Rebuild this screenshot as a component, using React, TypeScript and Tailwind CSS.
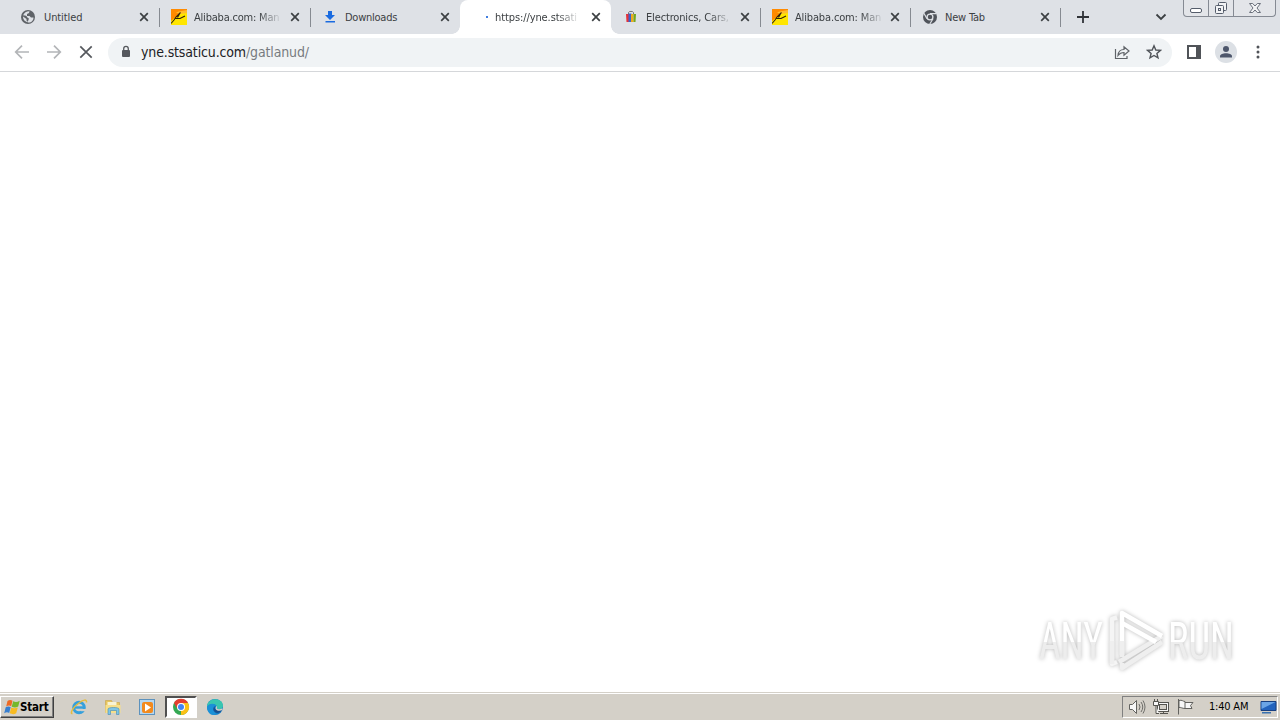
import React from "react";

type TabData = {
  title: string;
  icon: React.ReactNode;
  width?: string;
  titleClass?: string;
  active?: boolean;
  divider?: boolean;
  faded?: boolean;
};

const GlobeIcon = () => (
  <svg width="16" height="16" viewBox="0 0 16 16">
    <circle cx="7" cy="8" r="7" fill="#5f6368" />
    <path d="M8.500 2.200C6 2 3 3.500 2 6.500l3 .3 1.500 2L8 9.500l-1.500 4c4 .5 6-2 6-5L10 8.500 8.500 7H6V5l2-1z" fill="#dee1e6" />
    <path d="M2 6.500 5 7l1.500 2L5 11l1.500 3C3 13.500 1.500 10 2 6.500z" fill="#5f6368" />
    <path d="M2 7.500 5.500 10v1.500L7 13c-3 0-5-2.500-5-5.500z" fill="#dee1e6" />
  </svg>
);

const AlibabaIcon = () => (
  <svg width="16" height="16" viewBox="0 0 16 16">
    <rect width="16" height="16" fill="#ffe600" />
    <path d="M0 0h16v4L10 4C6 6 4 9 0 12z" fill="#ff8a00" />
    <path d="M5 3.500C9 1.500 12 2 16 1v3l-7 1z" fill="#ffbd2c" />
    <path d="M0 14.500 3 11l2-3 4.500-4.500M4.500 9.500H9L14 7M8.500 5 6.500 8.500" fill="none" stroke="#33200a" strokeWidth="1.100" />
  </svg>
);

const DownloadIcon = () => (
  <svg width="16" height="16" viewBox="0 0 16 16" fill="#1a6be0">
    <path d="M6 2h4v4h3l-5 5-5-5h3zM3.500 12h9.500v1.500H3.500z" />
  </svg>
);

const BagIcon = () => (
  <svg width="16" height="16" viewBox="0 0 16 16">
    <path d="M5.500 5V3.500C5.500 2 10.500 2 10.500 3.500V5" fill="none" stroke="#777" />
    <path d="M3 5h3v8H3.500z" fill="#e53238" />
    <path d="M5.500 4.500h3V13h-3z" fill="#3b62cf" />
    <path d="M8 5h2.500v8H8z" fill="#f0a91c" />
    <path d="M10.500 5H13l-.5 8h-2z" fill="#74a820" />
  </svg>
);

const ChromeGrayIcon = () => (
  <svg width="16" height="16" viewBox="0 0 16 16">
    <circle cx="8" cy="8" r="7" fill="#50545b" />
    <circle cx="8" cy="8" r="2.900" fill="#50545b" stroke="#dee1e6" strokeWidth="1.300" />
    <path d="M8 4.600h6.300M5 9.700 1.900 4.300M11 9.700 7.800 15" stroke="#dee1e6" strokeWidth="1.200" />
  </svg>
);

const LoadingIcon = () => (
  <svg width="16" height="16" viewBox="0 0 16 16">
    <rect x="14" y="7" width="2" height="2" fill="#3f7de0" />
  </svg>
);

const CloseIcon = () => (
  <svg width="10" height="10" viewBox="0 0 10 10" className="shrink-0">
    <path d="m1.200 1.200 7.600 7.600m0-7.600L1.200 8.800" stroke="#3c4043" strokeWidth="1.700" />
  </svg>
);

const TABS: TabData[] = [
  { title: "Untitled", icon: <GlobeIcon />, width: "w-[150px]", titleClass: "tracking-[-0.1px] -ml-px" },
  { title: "Alibaba.com: Man", icon: <AlibabaIcon />, width: "w-[151px]", titleClass: "tracking-[-0.2px]", divider: true, faded: true },
  { title: "Downloads", icon: <DownloadIcon />, titleClass: "tracking-[-0.25px]", divider: true },
  { title: "https://yne.stsati", icon: <LoadingIcon />, width: "w-[151px]", titleClass: "tracking-[-0.1px]", active: true, faded: true },
  { title: "Electronics, Cars,", icon: <BagIcon />, width: "w-[149px]", titleClass: "tracking-[-0.15px] -ml-px", faded: true },
  { title: "Alibaba.com: Man", icon: <AlibabaIcon />, titleClass: "tracking-[-0.15px]", divider: true, faded: true },
  { title: "New Tab", icon: <ChromeGrayIcon />, titleClass: "tracking-[-0.2px]", divider: true },
];

const Tab = ({ tab }: { tab: TabData }) => (
  <div
    className={`relative flex h-[34px] shrink-0 items-center pl-3 pr-[10px] ${tab.width ?? "w-[150px]"} ${
      tab.active ? "rounded-t-lg bg-white" : ""
    }`}
  >
    {tab.divider && <span className="absolute left-0 top-2 h-[19px] w-px bg-[#868a91]" />}
    {tab.active && (
      <>
        <span className="absolute -left-2 bottom-0 size-2 bg-[radial-gradient(circle_at_top_left,transparent_7.5px,white_8px)]" />
        <span className="absolute -right-2 bottom-0 size-2 bg-[radial-gradient(circle_at_top_right,transparent_7.5px,white_8px)]" />
      </>
    )}
    <span className="-mr-px flex w-4 shrink-0">{tab.icon}</span>
    <span
      className={`ml-2 mt-px shrink-0 whitespace-nowrap text-[11px] leading-4 text-[#3c4043] ${
        tab.faded ? "[mask-image:linear-gradient(to_right,black_76%,transparent_104%)]" : ""
      } ${tab.titleClass}`}
    >
      {tab.title}
    </span>
    <span className="ml-auto flex"><CloseIcon /></span>
  </div>
);

const WindowControls = () => (
  <div className="flex h-[17px] w-[93px] shrink-0 self-start rounded-b-[4px] border border-t-0 border-[#858a93] bg-[#e3e5e9]">
    <div className="flex w-[25px] items-center justify-center border-r border-[#858a93]">
      <svg width="14" height="16" viewBox="0 0 14 16">
        <rect x="1.500" y="8.500" width="11" height="4" rx="1.500" fill="#fff" stroke="#555d6b" />
      </svg>
    </div>
    <div className="flex w-[25px] items-center justify-center border-r border-[#858a93]">
      <svg width="14" height="16" viewBox="0 0 14 16" fill="#f2f3f5" stroke="#555d6b">
        <rect x="4.500" y="2.500" width="8" height="8" rx="1" />
        <rect x="1.500" y="5.500" width="8" height="8" rx="1" />
        <rect x="4.500" y="8.500" width="2" height="2" />
      </svg>
    </div>
    <div className="flex flex-1 items-center justify-center">
      <svg width="14" height="16" viewBox="0 0 14 16">
        <path d="M1.500 3.500h3.200L7 6l2.300-2.500h3.200L9 8l3.500 4.500H9.300L7 10l-2.300 2.500H1.500L5 8z" fill="#f2f3f5" stroke="#6b717c" />
      </svg>
    </div>
  </div>
);

const TabStrip = () => (
  <div className="flex h-[34px] shrink-0 items-center bg-[#dee1e6] pl-[9px]">
    {TABS.map((tab, i) => (
      <Tab key={i} tab={tab} />
    ))}
    <span className="h-[19px] w-px bg-[#868a91]" />
    <svg width="12" height="12" viewBox="0 0 12 12" className="ml-4">
      <path d="M6 0v12M0 6h12" stroke="#303338" strokeWidth="1.800" />
    </svg>
    <svg width="12" height="8" viewBox="0 0 12 8" className="ml-[66px]">
      <path d="m1.500 1.500 4.500 4.500 4.500-4.500" fill="none" stroke="#3c4043" strokeWidth="1.800" />
    </svg>
    <div className="ml-4 self-start">
      <WindowControls />
    </div>
  </div>
);

const Toolbar = () => (
  <div className="flex h-[38px] shrink-0 items-center border-b border-[#d5d7da] bg-white pb-px pl-[14px]">
    <svg width="16" height="16" viewBox="0 0 16 16" fill="none" stroke="#b3b5b8" strokeWidth="1.700">
      <path d="M15 8H2M8 1.700 1.700 8 8 14.300" />
    </svg>
    <svg width="16" height="16" viewBox="0 0 16 16" fill="none" stroke="#b3b5b8" strokeWidth="1.700" className="ml-4">
      <path d="M1 8h13M8 1.700 14.300 8 8 14.300" />
    </svg>
    <svg width="16" height="16" viewBox="0 0 16 16" className="ml-4">
      <path d="m2.300 2.300 11.400 11.400m0-11.400L2.300 13.700" stroke="#55585d" strokeWidth="1.700" />
    </svg>
    <div className="ml-[14px] flex h-[29px] w-[1064px] items-center rounded-full bg-[#f0f3f5] pl-[13px] pr-[10px]">
      <svg width="10" height="14" viewBox="0 0 10 14">
        <rect x="1" y="5" width="8" height="7" rx="1" fill="#55585d" />
        <path d="M2.700 5.500V3.700a2.300 2.300 0 0 1 4.600 0v1.800" fill="none" stroke="#55585d" strokeWidth="1.300" />
      </svg>
      <span className="ml-[10px] whitespace-nowrap text-[14px] leading-5 tracking-[-0.14px] text-[#777b80]">
        <span className="text-[#202124]">yne.stsaticu.com</span>/gatlanud/
      </span>
      <svg width="16" height="16" viewBox="0 0 16 16" fill="none" stroke="#5f6368" strokeWidth="1.200" className="ml-auto">
        <path d="M1.500 5v9.500H13V12M4 11.500c.3-4 2.300-6 6-6V2.700L15 7l-5 4.200V8.500c-2.700 0-4.500 1-6 3z" />
      </svg>
      <svg width="16" height="16" viewBox="0 0 16 16" fill="none" stroke="#505459" strokeWidth="1.400" className="ml-4">
        <path d="m8 1.800 1.800 4.200 4.600.4-3.500 3 1.100 4.500L8 11.500l-4 2.400 1.100-4.500-3.500-3 4.600-.4z" />
      </svg>
    </div>
    <svg width="14" height="14" viewBox="0 0 14 14" className="ml-[15px]">
      <path d="M1 1h12v12H1z" fill="#fff" stroke="#505358" strokeWidth="2" />
      <path d="M9 1h4v12H9z" fill="#505358" />
    </svg>
    <svg width="22" height="22" viewBox="0 0 22 22" className="ml-[14px]">
      <circle cx="11" cy="11" r="11" fill="#dce0e5" />
      <circle cx="11" cy="8" r="3" fill="#4d566b" />
      <path d="M5 16.500v-1.300C5 11.300 17 11.300 17 15.200v1.300z" fill="#4d566b" />
    </svg>
    <svg width="4" height="14" viewBox="0 0 4 14" fill="#505358" className="ml-[19px]">
      <circle cx="2" cy="2" r="1.500" />
      <circle cx="2" cy="7" r="1.500" />
      <circle cx="2" cy="12" r="1.500" />
    </svg>
  </div>
);

const Watermark = () => (
  <svg
    width="210"
    height="72"
    viewBox="1030 604 210 72"
    className="absolute bottom-[16px] right-[40px] [filter:drop-shadow(0_0_2px_rgba(0,0,0,0.28))]"
  >
    <defs>
      <linearGradient id="letters" x1="0" y1="622" x2="0" y2="660" gradientUnits="userSpaceOnUse">
        <stop offset="0.52" stopColor="#fff" />
        <stop offset="0.53" stopColor="#ededed" />
      </linearGradient>
    </defs>
    <g fill="url(#letters)" fontFamily="Roboto, sans-serif" fontSize="52">
      <text x="1039" y="659" textLength="64" lengthAdjust="spacingAndGlyphs">ANY</text>
      <text x="1168" y="659" textLength="66" lengthAdjust="spacingAndGlyphs">RUN</text>
    </g>
    <g fill="none" strokeWidth="4.500" strokeLinejoin="round">
      <path d="M1117 617.500 1112 619v45l5-2" stroke="#f5f5f5" />
      <path d="M1162 636 1119 662M1162 642l-40 26v-5" stroke="#efefef" />
      <path d="M1122 655v-42l40 23" stroke="#fff" />
      <path d="m1122 623 34 19" stroke="#fff" />
      <path d="M1112 641v23M1122 641v16" stroke="#efefef" />
    </g>
  </svg>
);

const StartFlag = () => (
  <svg width="17" height="16" viewBox="0 0 17 16">
    <path d="M3.500 2c2-1.500 3.500-1.200 5-.2L7.200 7.300c-1.500-1-3-1-5 .2z" fill="#ee6a24" />
    <path d="M9.200 2.300c2 1 4 1 6.500-.5L14.200 7.500c-2.500 1.500-4 1.200-6.500.2z" fill="#75b82b" />
    <path d="M1.700 8.300c2-1.200 3.500-1 5-.2L5.200 14c-1.500-1-3-1-5 .2z" fill="#377fd0" />
    <path d="M7.300 8.400c2 1 4 1 6.500 0L12.200 14.300c-2.500 1.200-4 1-6.500 0z" fill="#f8bb21" />
  </svg>
);

const ExplorerIcon = () => (
  <svg width="18" height="18" viewBox="0 0 18 18">
    <circle cx="9" cy="9.500" r="5.300" fill="none" stroke="#35a0dc" strokeWidth="3" />
    <path d="M5 9.500h9.500" stroke="#35a0dc" strokeWidth="2.400" />
    <path d="M11 11h6v2.200h-6z" fill="#d4d0c8" />
    <path d="M2.500 15.500C-.5 16 3 9 9 5c4.500-3.500 8-4 7.500-.5" fill="none" stroke="#e5bc3e" strokeWidth="1.500" />
  </svg>
);

const FolderIcon = () => (
  <svg width="18" height="18" viewBox="0 0 18 18">
    <path d="M1.500 2.500h6l1 2h7v10h-14z" fill="#e7c65f" stroke="#c8a349" strokeWidth=".6" />
    <path d="M3.500 4h9v5h-9z" fill="#f8f3d4" />
    <path d="M1.500 7h15v8h-15z" fill="#f6df8c" />
    <path d="M4 16.500v-5.500c0-2 11-2 11 0v5.500h-2.500v-4h-6v4z" fill="#7fc5e6" stroke="#4389b1" strokeWidth=".6" />
  </svg>
);

const MediaIcon = () => (
  <svg width="18" height="18" viewBox="0 0 18 18">
    <rect x="1.500" y="1.500" width="15" height="15" fill="#b5d7f1" stroke="#5d92bd" />
    <rect x="4" y="4" width="11" height="11" rx="2" fill="#f28a1e" />
    <path d="m7 5.500 6 4-6 4z" fill="#fff" />
  </svg>
);

const ChromeIcon = () => (
  <svg width="18" height="18" viewBox="0 0 18 18">
    <circle cx="9" cy="9" r="8" fill="#34a853" />
    <path d="M9 9V17A8 8 0 0 0 16 5H9z" fill="#fbc116" />
    <path d="M2 5a8 8 0 0 1 14 0H9L5.500 11z" fill="#e53e30" />
    <circle cx="9" cy="9" r="4" fill="#fff" />
    <circle cx="9" cy="9" r="3" fill="#4285f4" />
  </svg>
);

const EdgeIcon = () => (
  <svg width="18" height="18" viewBox="0 0 18 18">
    <circle cx="9" cy="9" r="8" fill="#137cc6" />
    <path d="M1 9C1-1 17-1 17 8c0 3-4 4-6 2.500C12 6 5 4 1 9z" fill="#39c6b0" />
    <path d="M1 9c2-4 8-4 9-1-4 0-4 6 1 8-5 3-10-1-10-7z" fill="#1b91d7" />
    <path d="M9.500 8c-2 2 0 5 6.500 4-1 2-3 3-5 3-4-1-5-5-1.500-7z" fill="#174f91" />
    <path d="M10.500 8c1 .5.500 1.500.2 2.300 1.300 1.500 4 1 5.500 0L16.500 12c-4 2-9 0-6-4z" fill="#d4d0c8" />
  </svg>
);

const Taskbar = () => (
  <div className="flex h-[27px] shrink-0 items-center bg-[#d4d0c8] pr-[2px] shadow-[inset_0_1px_0_white]">
    <button className="mt-px flex h-[22px] w-[54px] items-center border border-b-[#404040] border-l-white border-r-[#404040] border-t-white pl-[3px] text-[11.500px] font-bold tracking-[-0.2px] text-black shadow-[inset_-1px_-1px_0_#808080]">
      <StartFlag />
      <span className="-ml-px mt-px">Start</span>
    </button>
    <div className="ml-[16px] flex items-center gap-4">
      <ExplorerIcon />
      <FolderIcon />
      <MediaIcon />
    </div>
    <div className="ml-[9px] flex h-[22px] w-8 items-center justify-center border-2 border-b-white border-l-[#505050] border-r-white border-t-[#505050] bg-white">
      <ChromeIcon />
    </div>
    <span className="ml-[9px]"><EdgeIcon /></span>
    <div className="ml-auto flex h-[22px] w-[156px] items-center border border-b-white border-l-[#808080] border-r-white border-t-[#808080] pl-[5px]">
      <svg width="18" height="18" viewBox="0 0 18 18" fill="#f7f7f7" stroke="#62625f">
        <path d="M1.500 6.500h3l4-4v13l-4-4h-3z" />
        <path d="M11 6q2 3 0 6M13 4q3.500 5 0 10M15 2.500q4 6.500 0 13" fill="none" strokeWidth=".9" />
      </svg>
      <svg width="18" height="18" viewBox="0 0 18 18" fill="#f7f7f7" stroke="#55544f" className="ml-[6px]">
        <rect x="5.500" y="4.500" width="11" height="9" />
        <rect x="7.500" y="6.500" width="7" height="5" fill="#d4d0c8" />
        <path d="M8 15.500h8M11.500 13.500v2" />
        <path d="M1.500 3.500h5v4h-5zM2.500 1v2.500M5.500 1v2.500M4 7.500v8h3" />
      </svg>
      <svg width="18" height="18" viewBox="0 0 18 18" fill="#f7f7f7" stroke="#62625f" className="ml-[6px]">
        <path d="M2.500 1v15.500M3 2.500c3-1 4 1 6 1v7c-3 0-4-1.500-6-1zM9 4.500h8L14.500 7.500l1.500 3H9" />
      </svg>
      <span className="ml-[15px] mt-[2px] whitespace-nowrap text-[11px] tracking-[-0.2px] text-black">1:40 AM</span>
      <svg width="17" height="16" viewBox="0 0 17 16" className="ml-auto">
        <path d="M1 2.500h15v9H1z" fill="#2363bd" stroke="#173f80" />
        <path d="M1.500 3h14l-14 7z" fill="#6ba5e6" />
        <path d="M2 13h9v1.500H2z" fill="#3871af" />
      </svg>
    </div>
  </div>
);

export default function App() {
  return (
    <div className="flex h-[720px] w-[1280px] flex-col overflow-hidden bg-white font-['DejaVu_Sans_Condensed','DejaVu_Sans',sans-serif] [font-stretch:condensed]">
      <TabStrip />
      <Toolbar />
      <main className="relative flex-1 border-b border-[#d4d0c8] bg-white">
        <Watermark />
      </main>
      <Taskbar />
    </div>
  );
}
